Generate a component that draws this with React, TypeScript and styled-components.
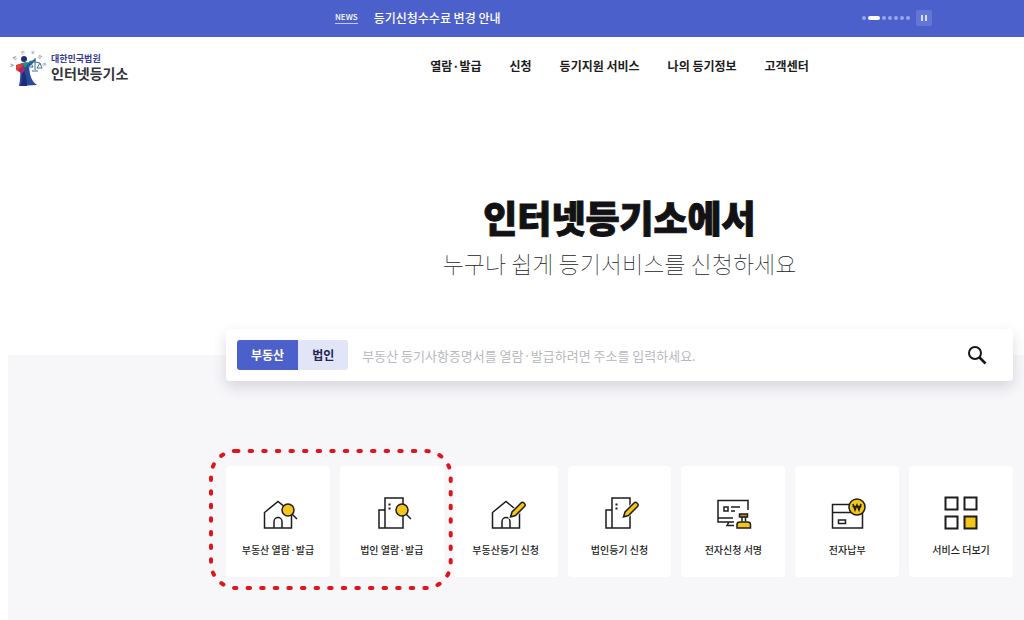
import React, { useState } from 'react';
import styled, { createGlobalStyle } from 'styled-components';

const GlobalStyle = createGlobalStyle`
  *, *::before, *::after { box-sizing: border-box; }
  body {
    margin: 0;
    background: #fff;
    color: #1c1c20;
    font-family: "Noto Sans CJK KR", "Noto Sans", sans-serif;
  }
  button, input { font-family: inherit; }
  a { color: inherit; text-decoration: none; }
`;

const Page = styled.div`
  display: flex;
  flex-direction: column;
  min-height: 100vh;
`;

const Banner = styled.aside`
  display: flex;
  align-items: center;
  justify-content: space-between;
  height: 37px;
  padding: 0 92px 2px 335px;
  background: #4c60cb;
  color: #fff;
`;

const BannerNews = styled.a`
  display: flex;
  align-items: center;
  gap: 16px;
  font-size: 12px;
  line-height: 18px;
  font-weight: 500;
  white-space: nowrap;
`;

const NewsTag = styled.span`
  border-bottom: 1px solid #c3cbf2;
  font-size: 8px;
  line-height: 12px;
`;

const Pager = styled.div`
  display: flex;
  align-items: center;
  gap: 2px;
`;

const Dot = styled.button<{ $active?: boolean }>`
  width: ${(p) => (p.$active ? 12 : 4)}px;
  height: 4px;
  padding: 0;
  border: 0;
  border-radius: 2px;
  background: ${(p) => (p.$active ? '#fff' : '#96a5ec')};
`;

const PauseButton = styled.button`
  display: grid;
  place-items: center;
  width: 16px;
  height: 16px;
  margin-left: 4px;
  padding: 0;
  border: 0;
  border-radius: 2px;
  background: #6375d6;
`;

const Header = styled.header`
  display: grid;
  grid-template-columns: 218px 1fr;
  align-items: center;
  height: 58px;
  padding: 0 11px 0 8px;
`;

const Brand = styled.a`
  display: flex;
  align-items: center;
  gap: 3px;
  padding-top: 2px;
`;

const BrandName = styled.span`
  display: flex;
  flex-direction: column;
  color: #333338;
  font-size: 14px;
  line-height: 16px;
  font-weight: 700;
  white-space: nowrap;
`;

const BrandCourt = styled.small`
  color: #383b91;
  font-size: 9px;
  line-height: 12px;
`;

const Nav = styled.nav`
  display: flex;
  justify-content: center;
  gap: 28px;
  font-size: 12px;
  line-height: 18px;
  font-weight: 700;
  white-space: nowrap;
`;

const Hero = styled.section`
  padding: 95px 11px 73px 226px;
  text-align: center;
`;

const Title = styled.h1`
  margin: 0;
  color: #121214;
  font-size: 37px;
  line-height: 54px;
  font-weight: 900;
  -webkit-text-stroke: 1px #121214;
`;

const Subtitle = styled.p`
  margin: 0;
  color: #222228;
  font-size: 23px;
  line-height: 38px;
  font-weight: 100;
`;

const Services = styled.main`
  flex: 1;
  margin-left: 8px;
  padding: 0 11px 42px 218px;
  background: #f7f7fa;
`;

const SearchBar = styled.form`
  display: flex;
  align-items: center;
  height: 52px;
  margin-top: -26px;
  padding: 0 25px 0 11px;
  border-radius: 4px;
  background: #fff;
  box-shadow: 0 6px 14px rgba(40, 40, 60, 0.16);
`;

const Tab = styled.button<{ $active: boolean }>`
  height: 30px;
  padding: 0 14px;
  border: 0;
  background: ${(p) => (p.$active ? '#4c60cb' : '#e2e4f8')};
  color: ${(p) => (p.$active ? '#fff' : '#22264e')};
  font-size: 12px;
  line-height: 18px;
  font-weight: 700;
  white-space: nowrap;
  &:first-child { border-radius: 3px 0 0 3px; }
  &:last-child { border-radius: 0 3px 3px 0; }
`;

const Tabs = styled.div`
  display: flex;
`;

const SearchInput = styled.input`
  flex: 1;
  min-width: 0;
  height: 30px;
  padding: 0 14px;
  border: 0;
  outline: 0;
  background: transparent;
  font-size: 13px;
  &::placeholder { color: #b9b9bd; opacity: 1; }
`;

const SearchButton = styled.button`
  display: grid;
  place-items: center;
  padding: 0;
  border: 0;
  background: none;
`;

const CardArea = styled.div`
  position: relative;
  margin-top: 85px;
`;

const CardGrid = styled.ul`
  display: grid;
  grid-template-columns: repeat(7, 1fr);
  gap: 10px;
  margin: 0;
  padding: 0;
  list-style: none;
`;

const Card = styled.a`
  display: flex;
  flex-direction: column;
  align-items: center;
  gap: 10px;
  height: 111px;
  padding-top: 26px;
  border-radius: 4px;
  background: #fff;
  font-size: 10px;
  line-height: 16px;
  font-weight: 500;
  white-space: nowrap;
`;

const Highlight = styled.svg`
  position: absolute;
  top: -17px;
  left: -17px;
  width: calc((100% - 60px) / 7 * 2 + 36px);
  height: 142px;
  overflow: visible;
  pointer-events: none;
`;

const INK = '#1d1d1f';
const YELLOW = '#f5c518';

const House = () => (
  <path d="M4.500 36V20.500L18 9.500l13.500 11V36zM14 36v-6.500a4 4 0 0 1 8 0V36" />
);
const Building = () => (
  <>
    <path d="M11 36V6h18v30zM11 18H5v18h6" />
    <path d="M14.500 12.500h2M14.500 16.500h2" strokeWidth="2" />
  </>
);
const Lens = () => (
  <>
    <path d="m32 22 5 5" />
    <circle cx="28" cy="18" r="6" fill={YELLOW} />
  </>
);
const Pencil = () => (
  <>
    <path d="m22.500 25 1.500-5 9-9a2 2 0 0 1 3 0l.5.5a2 2 0 0 1 0 3l-9 9z" stroke="#fff" strokeWidth="3" />
    <path d="m22.500 25 1.500-5 9-9a2 2 0 0 1 3 0l.5.5a2 2 0 0 1 0 3l-9 9z" fill={YELLOW} />
  </>
);
const Signature = () => (
  <>
    <path d="M33 18V8.500H3V30h16M3 26h15M14 30l-2 3.500h7" />
    <path d="M9 15h4v4H9zM16 15h9M16 19h4" />
    <path d="M24.500 22h8v3h-8zM27 25.500v4M30.500 25.500v4" fill="#b98b22" />
    <path d="M22 36v-3.500q0-2.500 3-2.500h7.500q3 0 3 2.500V36z" fill={YELLOW} />
  </>
);
const Payment = () => (
  <>
    <path d="M3.500 12.500h30V36h-30zM3.500 20.500h30M9.500 28h7v3.500h-7z" />
    <circle cx="28" cy="15" r="8" fill={YELLOW} />
    <path d="m24 12 2 6 2-5 2 5 2-6M23.500 14.500h9" />
  </>
);
const More = () => (
  <>
    <path d="M2.500 5.500h12v12h-12zM21.500 5.500h12v12h-12zM2.500 24.500h12v12h-12z" strokeWidth="2" />
    <path d="M21.500 24.500h12v12h-12z" fill={YELLOW} strokeWidth="2" />
  </>
);

const services: { label: string; art: React.ReactNode }[] = [
  { label: '부동산 열람·발급', art: <><House /><Lens /></> },
  { label: '법인 열람·발급', art: <><Building /><Lens /></> },
  { label: '부동산등기 신청', art: <><House /><Pencil /></> },
  { label: '법인등기 신청', art: <><Building /><Pencil /></> },
  { label: '전자신청 서명', art: <Signature /> },
  { label: '전자납부', art: <Payment /> },
  { label: '서비스 더보기', art: <More /> },
];

const menu = ['열람·발급', '신청', '등기지원 서비스', '나의 등기정보', '고객센터'];

const Emblem = () => (
  <svg width="40" height="40" viewBox="0 0 40 40" overflow="visible" aria-hidden="true">
    <g fill="#66667f" fontSize="4" textAnchor="middle">
      <text transform="translate(5 19) rotate(-65)">대</text>
      <text transform="translate(8 12) rotate(-40)">한</text>
      <text transform="translate(15 7) rotate(-12)">민</text>
      <text transform="translate(24 7) rotate(14)">국</text>
      <text transform="translate(31 11) rotate(38)">법</text>
      <text transform="translate(35 18) rotate(65)">원</text>
    </g>
    <path d="M12 18q4-4 8-2l7-4 1 1-7 7 1 7q2 8 7 11l-18 1q2-9 1-21z" fill="#274a9b" />
    <path d="M13 24q3 8-1 15h7q0-9-3-15z" fill="#202c78" />
    <path d="m8 18 6-2 2 5-3 5-5-3z" fill="#de3e34" />
    <path d="m10 23 5-4 2 4-3 4z" fill="#a62672" />
    <path d="m14 16 7-1-4 6z" fill="#1b9877" />
    <circle cx="16" cy="12" r="3" fill="#252c72" />
    <path d="M27 11v12M22 14l10 2M22 14l-2 6h5zM32 16l-3 5h5zM24 24h6" fill="none" stroke="#35758f" strokeWidth="1" />
  </svg>
);

export default function App() {
  const [kind, setKind] = useState('부동산');
  return (
    <Page>
      <GlobalStyle />
      <Banner>
        <BannerNews href="#news">
          <NewsTag>NEWS</NewsTag>
          등기신청수수료 변경 안내
        </BannerNews>
        <Pager>
          {[1, 2, 3, 4, 5, 6, 7].map((n) => (
            <Dot key={n} type="button" $active={n === 2} aria-label={`${n}`} />
          ))}
          <PauseButton type="button" aria-label="정지">
            <svg width="8" height="8" viewBox="0 0 8 8" stroke="#fff" strokeWidth="1.500">
              <path d="M2 1v6M6 1v6" />
            </svg>
          </PauseButton>
        </Pager>
      </Banner>
      <Header>
        <Brand href="#home">
          <Emblem />
          <BrandName>
            <BrandCourt>대한민국법원</BrandCourt>
            인터넷등기소
          </BrandName>
        </Brand>
        <Nav>
          {menu.map((m) => (
            <a key={m} href={`#${m}`}>{m}</a>
          ))}
        </Nav>
      </Header>
      <Hero>
        <Title>인터넷등기소에서</Title>
        <Subtitle>누구나 쉽게 등기서비스를 신청하세요</Subtitle>
      </Hero>
      <Services>
        <SearchBar onSubmit={(e) => e.preventDefault()}>
          <Tabs>
            {['부동산', '법인'].map((k) => (
              <Tab key={k} type="button" $active={kind === k} onClick={() => setKind(k)}>{k}</Tab>
            ))}
          </Tabs>
          <SearchInput
            aria-label="주소 검색"
            placeholder="부동산 등기사항증명서를 열람·발급하려면 주소를 입력하세요."
          />
          <SearchButton type="submit" aria-label="검색">
            <svg width="22" height="22" viewBox="0 0 22 22" fill="none" stroke="#161618" strokeWidth="2">
              <circle cx="9" cy="9" r="6" />
              <path d="m13.500 13.500 6 6" strokeWidth="2.500" />
            </svg>
          </SearchButton>
        </SearchBar>
        <CardArea>
          <CardGrid>
            {services.map((s) => (
              <li key={s.label}>
                <Card href={`#${s.label}`}>
                  <svg width="40" height="40" viewBox="-2 0 40 40" overflow="visible" fill="none" stroke={INK} strokeWidth="1.500" aria-hidden="true">
                    {s.art}
                  </svg>
                  {s.label}
                </Card>
              </li>
            ))}
          </CardGrid>
          <Highlight aria-hidden="true">
            <rect
              x="2" y="2" width="calc(100% - 4px)" height="137" rx="25"
              fill="none" stroke="#df151d" strokeWidth="4"
              strokeLinecap="round" strokeDasharray="2.500 11.100"
            />
          </Highlight>
        </CardArea>
      </Services>
    </Page>
  );
}
